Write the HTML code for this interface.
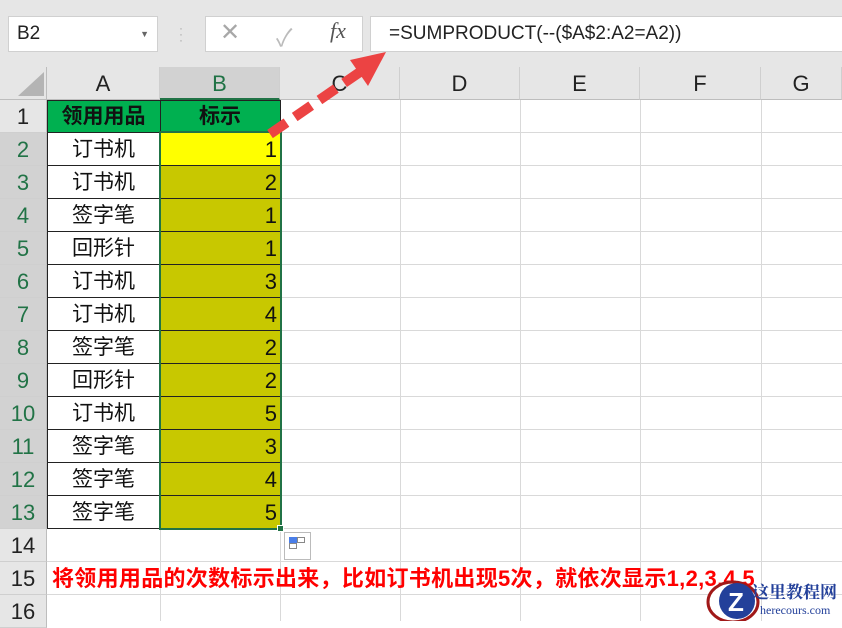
<!DOCTYPE html>
<html><head><meta charset="utf-8"><style>
*{margin:0;padding:0;box-sizing:border-box}
body{width:842px;height:621px;overflow:hidden;background:#fff;font-family:"Liberation Sans","Noto Sans CJK SC",sans-serif;position:relative}
.a{position:absolute}
.top{left:0;top:0;width:842px;height:67px;background:#e6e6e6}
.box{background:#fff;border:1px solid #d0d0d0}
.ch{top:67px;height:33px;background:#e6e6e6;border-right:1px solid #cfcfcf;border-bottom:1px solid #bdbdbd;text-align:center;font-size:22px;line-height:33px;color:#222}
.rh{left:0;width:47px;background:#e6e6e6;border-bottom:1px solid #cfcfcf;border-right:1px solid #bdbdbd;text-align:center;font-size:22px;color:#222}
.sel{background:#d2d2d2;color:#217346}
.hl{left:47px;width:795px;height:1px;background:#d9d9d9}
.vl{top:100px;width:1px;height:521px;background:#d9d9d9}
.c{font-size:21px;text-align:center;color:#111}
</style></head><body>
<div class="a top"></div>
<div class="a box" style="left:8px;top:16px;width:150px;height:36px;font-size:19px;line-height:34px;padding-left:8px;color:#222">B2<span style="position:absolute;right:8px;top:0;font-size:9px;color:#666">▼</span></div>
<div class="a" style="left:179px;top:25px;color:#aaa;font-size:12px;line-height:6px">·<br>·<br>·</div>
<div class="a box" style="left:205px;top:16px;width:158px;height:36px"></div>
<div class="a" style="left:220px;top:18px;font-size:24px;color:#a8a8a8">✕</div>
<div class="a" style="left:276px;top:18px;font-size:24px;color:#bbb">✓</div>
<div class="a" style="left:330px;top:18px;font-size:22px;color:#555;font-family:'Liberation Serif',serif;font-style:italic">fx</div>
<div class="a box" style="left:370px;top:16px;width:480px;height:36px;font-size:19px;line-height:34px;padding-left:18px;color:#222">=SUMPRODUCT(--($A$2:A2=A2))</div>

<div class="a" style="left:0;top:67px;width:47px;height:33px;background:#e6e6e6;border-right:1px solid #bdbdbd;border-bottom:1px solid #bdbdbd"></div>
<div class="a" style="left:18px;top:72px;width:0;height:0;border-left:26px solid transparent;border-bottom:24px solid #b4b4b4"></div>
<div class="a ch" style="left:47px;width:113px">A</div>
<div class="a ch sel" style="left:160px;width:120px;border-bottom:2px solid #217346">B</div>
<div class="a ch" style="left:280px;width:120px">C</div>
<div class="a ch" style="left:400px;width:120px">D</div>
<div class="a ch" style="left:520px;width:120px">E</div>
<div class="a ch" style="left:640px;width:121px">F</div>
<div class="a ch" style="left:761px;width:81px">G</div>

<div class="a rh" style="top:100px;height:33px;line-height:33px">1</div>
<div class="a rh sel" style="top:133px;height:33px;line-height:33px">2</div>
<div class="a rh sel" style="top:166px;height:33px;line-height:33px">3</div>
<div class="a rh sel" style="top:199px;height:33px;line-height:33px">4</div>
<div class="a rh sel" style="top:232px;height:33px;line-height:33px">5</div>
<div class="a rh sel" style="top:265px;height:33px;line-height:33px">6</div>
<div class="a rh sel" style="top:298px;height:33px;line-height:33px">7</div>
<div class="a rh sel" style="top:331px;height:33px;line-height:33px">8</div>
<div class="a rh sel" style="top:364px;height:33px;line-height:33px">9</div>
<div class="a rh sel" style="top:397px;height:33px;line-height:33px">10</div>
<div class="a rh sel" style="top:430px;height:33px;line-height:33px">11</div>
<div class="a rh sel" style="top:463px;height:33px;line-height:33px">12</div>
<div class="a rh sel" style="top:496px;height:33px;line-height:33px">13</div>
<div class="a rh" style="top:529px;height:33px;line-height:33px">14</div>
<div class="a rh" style="top:562px;height:33px;line-height:33px">15</div>
<div class="a rh" style="top:595px;height:33px;line-height:33px">16</div>

<div class="a hl" style="top:132px"></div><div class="a hl" style="top:165px"></div><div class="a hl" style="top:198px"></div><div class="a hl" style="top:231px"></div><div class="a hl" style="top:264px"></div><div class="a hl" style="top:297px"></div><div class="a hl" style="top:330px"></div><div class="a hl" style="top:363px"></div><div class="a hl" style="top:396px"></div><div class="a hl" style="top:429px"></div><div class="a hl" style="top:462px"></div><div class="a hl" style="top:495px"></div><div class="a hl" style="top:528px"></div><div class="a hl" style="top:561px"></div><div class="a hl" style="top:594px"></div>
<div class="a vl" style="left:160px"></div><div class="a vl" style="left:280px"></div><div class="a vl" style="left:400px"></div><div class="a vl" style="left:520px"></div><div class="a vl" style="left:640px"></div><div class="a vl" style="left:761px"></div>

<div class="a" style="left:47px;top:100px;width:234px;height:33px;background:#00b050;border:1px solid #222"></div>
<div class="a" style="left:160px;top:100px;width:1px;height:33px;background:#222"></div>
<div class="a c" style="left:47px;top:100px;width:113px;line-height:33px;font-weight:bold">领用用品</div>
<div class="a c" style="left:160px;top:100px;width:120px;line-height:33px;font-weight:bold">标示</div>

<div class="a" style="left:47px;top:133px;width:114px;height:396px;border:1px solid #222;border-top:none;background:repeating-linear-gradient(#fff 0 32px,#222 32px 33px)"></div>
<div class="a" style="left:160px;top:133px;width:121px;height:396px;background:repeating-linear-gradient(#c8c800 0 32px,#222 32px 33px)"></div>
<div class="a" style="left:161px;top:133px;width:119px;height:32px;background:#ffff00"></div>
<div class="a" style="left:159px;top:131px;width:123px;height:399px;border:2px solid #217346"></div>
<div class="a" style="left:277px;top:525px;width:7px;height:7px;background:#217346;border:1px solid #fff"></div>

<div class="a c" style="left:47px;top:133px;width:113px;line-height:33px">订书机<br>订书机<br>签字笔<br>回形针<br>订书机<br>订书机<br>签字笔<br>回形针<br>订书机<br>签字笔<br>签字笔<br>签字笔</div>
<div class="a c" style="left:160px;top:133px;width:117px;line-height:33px;text-align:right;font-size:22px">1<br>2<br>1<br>1<br>3<br>4<br>2<br>2<br>5<br>3<br>4<br>5</div>

<div class="a" style="left:284px;top:532px;width:27px;height:28px;border:1px solid #bbb;background:#fff"></div>
<div class="a" style="left:289px;top:537px;width:8px;height:6px;background:#4a7ee8"></div>
<div class="a" style="left:297px;top:537px;width:8px;height:6px;border:1px solid #888"></div>
<div class="a" style="left:289px;top:543px;width:8px;height:6px;border:1px solid #888"></div>

<div class="a" style="left:52px;top:562px;line-height:33px;font-size:22px;font-weight:bold;color:#ff0000;white-space:nowrap;letter-spacing:0.3px">将领用用品的次数标示出来，比如订书机出现5次，就依次显示1,2,3,4,5</div>

<svg class="a" style="left:0;top:0" width="842" height="621">
<line x1="270" y1="134" x2="360" y2="72" stroke="#ec4343" stroke-width="10" stroke-dasharray="20,10"/>
<polygon points="386,52 350,60 368,86" fill="#ec4343"/>
<g>
<ellipse cx="733" cy="602" rx="25" ry="20" fill="#fff" stroke="#a01818" stroke-width="3"/>
<circle cx="737" cy="601" r="18" fill="#23409a"/>
<text x="728" y="611" font-size="26" font-weight="bold" fill="#fff" font-family="Liberation Sans,sans-serif">Z</text>
</g>
<text x="752" y="598" font-size="17" font-weight="bold" fill="#23409a" font-family="Noto Serif CJK SC,serif">这里教程网</text>
<text x="760" y="614" font-size="12" fill="#23409a" font-family="Liberation Serif,serif">herecours.com</text>
</svg>
</body></html>
